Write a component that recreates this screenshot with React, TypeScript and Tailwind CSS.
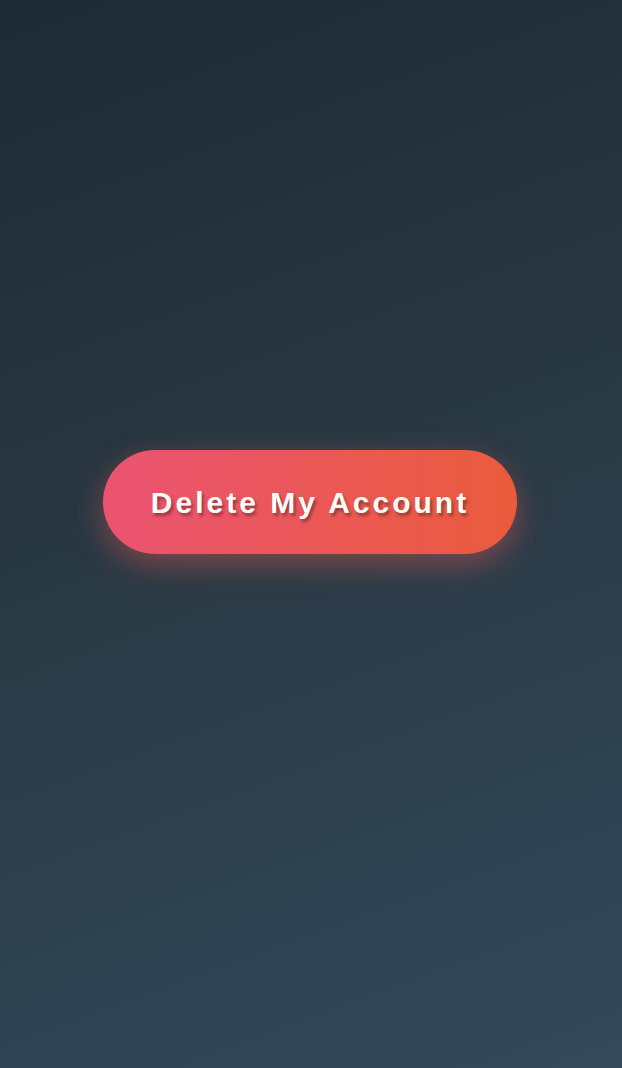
export default function App() {
  return (
    <div className="min-h-[1068px] w-full bg-[linear-gradient(160deg,#1e2a33_0%,#2a3a45_50%,#34495a_100%)] flex flex-col items-center pt-[450px]">
      <button
        className="w-[414px] h-[104px] ml-[-2px] rounded-full bg-[linear-gradient(90deg,#eb5472,#ea5b3c)] shadow-[0_10px_30px_rgba(235,87,87,0.45)] flex items-center justify-center text-white font-bold text-[30px] tracking-[3px] [text-shadow:2px_3px_3px_rgba(0,0,0,0.35)]"
        style={{ fontFamily: '"Liberation Sans", Arial, sans-serif' }}
      >
        Delete My Account
      </button>
    </div>
  );
}
